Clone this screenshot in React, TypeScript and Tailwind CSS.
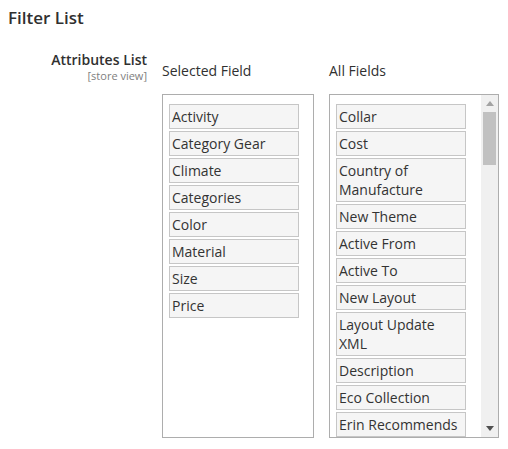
const selected = [
  "Activity",
  "Category Gear",
  "Climate",
  "Categories",
  "Color",
  "Material",
  "Size",
  "Price",
];

const allFields = [
  "Collar",
  "Cost",
  "Country of Manufacture",
  "New Theme",
  "Active From",
  "Active To",
  "New Layout",
  "Layout Update XML",
  "Description",
  "Eco Collection",
  "Erin Recommends",
];

function Item({ label }: { label: string }) {
  return (
    <li className="w-[130px] mb-[2px] border border-[#c6c6c6] bg-[#f5f5f5] pl-[2px] pr-[2px] py-[2px] text-[14px] leading-[19px] text-[#333333]">
      {label}
    </li>
  );
}

function ScrollBar() {
  return (
    <div className="w-[17px] shrink-0 bg-[#f0f0f0] flex flex-col">
      <div className="h-[17px] flex items-center justify-center">
        <svg width="8" height="5" viewBox="0 0 8 5">
          <polygon points="0,5 8,5 4,0" fill="#a3a3a3" />
        </svg>
      </div>
      <div className="mx-[2px] h-[53px] bg-[#c1c1c1]" />
      <div className="flex-1" />
      <div className="h-[17px] flex items-center justify-center">
        <svg width="8" height="5" viewBox="0 0 8 5">
          <polygon points="0,0 8,0 4,5" fill="#505050" />
        </svg>
      </div>
    </div>
  );
}

export default function App() {
  return (
    <div
      className="w-[508px] h-[449px] bg-white text-[#303030] overflow-hidden"
      style={{ fontFamily: '"Open Sans", "Liberation Sans", sans-serif' }}
    >
      <h2 className="pt-[6px] pl-[8px] text-[17px] leading-[24px] font-semibold text-[#303030]">
        Filter List
      </h2>

      <div className="flex mt-[20px]">
        <div className="w-[147px] shrink-0 text-right">
          <div className="text-[14px] leading-[19px] font-semibold text-[#303030]">
            Attributes List
          </div>
          <div className="text-[11px] leading-[14px] text-[#808080]">
            [store view]
          </div>
        </div>

        <div className="ml-[15px] mt-[11px] w-[152px] shrink-0">
          <div className="text-[14px] leading-[19px] text-[#303030]">
            Selected Field
          </div>
          <div className="mt-[14px] h-[344px] border border-[#adadad] pt-[9px] px-[6px]">
            <ul>
              {selected.map((s) => (
                <Item key={s} label={s} />
              ))}
            </ul>
          </div>
        </div>

        <div className="ml-[15px] mt-[11px] w-[170px] shrink-0">
          <div className="text-[14px] leading-[19px] text-[#303030]">
            All Fields
          </div>
          <div className="mt-[14px] h-[344px] border border-[#adadad] flex">
            <div className="flex-1 overflow-hidden pt-[9px] pl-[6px]">
              <ul>
                {allFields.map((s) => (
                  <Item key={s} label={s} />
                ))}
              </ul>
            </div>
            <ScrollBar />
          </div>
        </div>
      </div>
    </div>
  );
}
